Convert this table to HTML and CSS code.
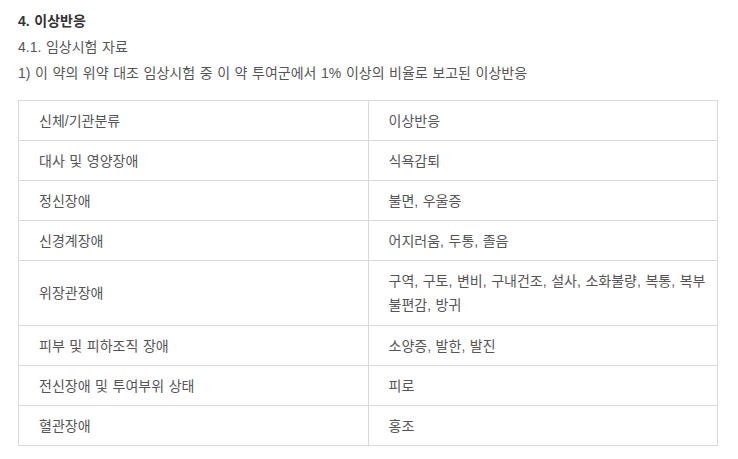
FILE: index.html
```html
<!DOCTYPE html>
<html lang="ko">
<head>
<meta charset="utf-8">
<link rel="stylesheet" href="styles.css">
</head>
<body>
<div class="doc">
  <h4 class="title">4. 이상반응</h4>
  <p class="sub">4.1. 임상시험 자료</p>
  <p class="desc">1) 이 약의 위약 대조 임상시험 중 이 약 투여군에서 1% 이상의 비율로 보고된 이상반응</p>
  <table class="tbl">
    <tr><td>신체/기관분류</td><td>이상반응</td></tr>
    <tr><td>대사 및 영양장애</td><td>식욕감퇴</td></tr>
    <tr><td>정신장애</td><td>불면, 우울증</td></tr>
    <tr><td>신경계장애</td><td>어지러움, 두통, 졸음</td></tr>
    <tr class="tall"><td>위장관장애</td><td>구역, 구토, 변비, 구내건조, 설사, 소화불량, 복통, 복부불편감, 방귀</td></tr>
    <tr><td>피부 및 피하조직 장애</td><td>소양증, 발한, 발진</td></tr>
    <tr><td>전신장애 및 투여부위 상태</td><td>피로</td></tr>
    <tr><td>혈관장애</td><td>홍조</td></tr>
  </table>
</div>
</body>
</html>
```
FILE: styles.css
```css
html, body { margin: 0; padding: 0; background: #fff; }
body {
  font-family: "Liberation Sans", "Noto Sans CJK KR", sans-serif;
  font-size: 14px;
  color: #555;
  word-spacing: 0.7px;
}
.doc { padding: 8px 18px 0 18px; }
.title {
  margin: 0;
  font-size: 14px;
  font-weight: bold;
  color: #333;
  line-height: 26px;
}
.sub, .desc {
  margin: 0;
  line-height: 26px;
}
.desc { margin-bottom: 14px; }
.tbl {
  width: 700px;
  border-collapse: collapse;
  table-layout: fixed;
}
.tbl td {
  border: 1px solid #d9d9d9;
  height: 40px;
  padding: 0 4px 0 20px;
  line-height: 24px;
  vertical-align: middle;
  box-sizing: border-box;
  word-break: break-all;
}
.tbl tr.tall td { height: 65px; padding-top: 4px; padding-bottom: 4px; }
```
